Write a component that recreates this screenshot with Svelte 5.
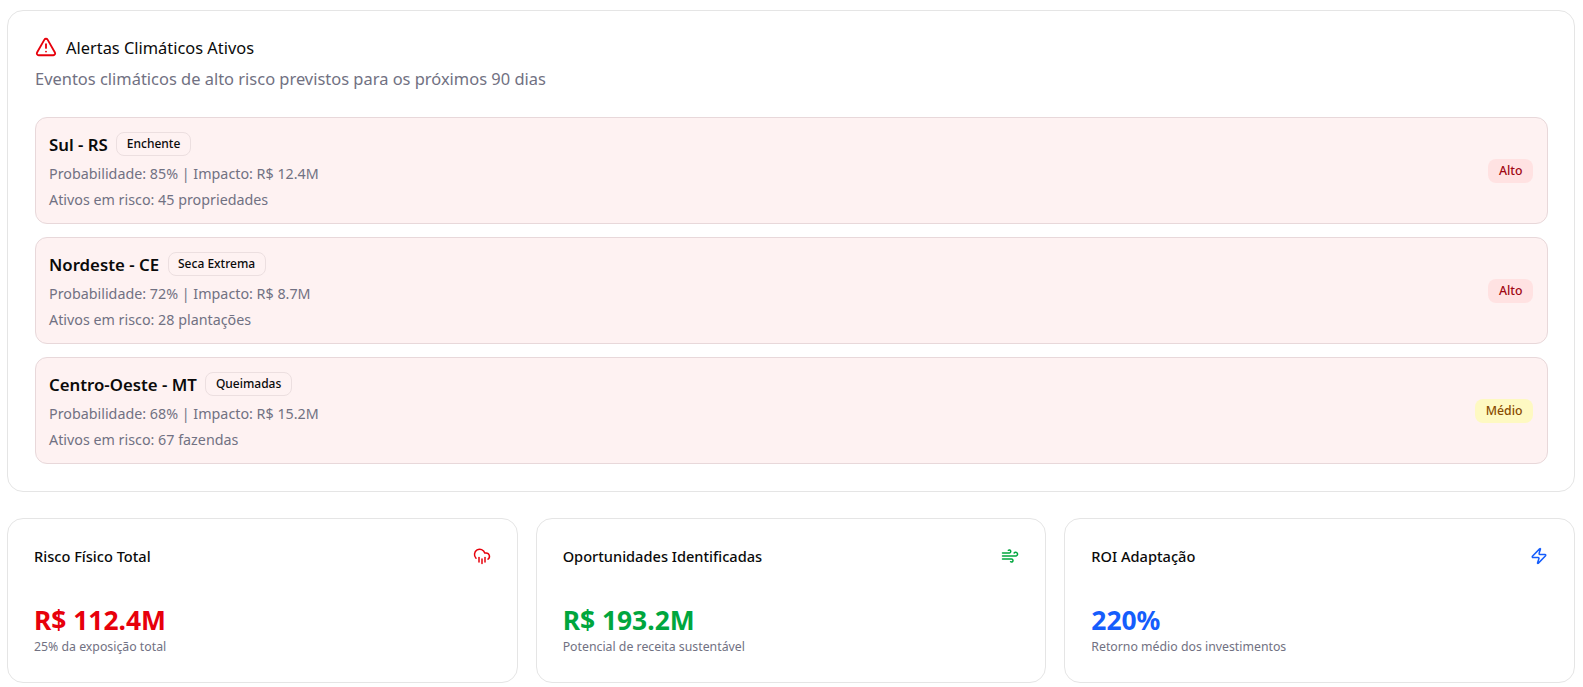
<script lang="ts">
  const alerts = [
    { region: "Sul - RS", type: "Enchente", prob: "85%", impact: "R$ 12.4M", assets: "45 propriedades", level: "Alto", tone: "high" },
    { region: "Nordeste - CE", type: "Seca Extrema", prob: "72%", impact: "R$ 8.7M", assets: "28 plantações", level: "Alto", tone: "high" },
    { region: "Centro-Oeste - MT", type: "Queimadas", prob: "68%", impact: "R$ 15.2M", assets: "67 fazendas", level: "Médio", tone: "mid" },
  ];

  const stats = [
    { title: "Risco Físico Total", value: "R$ 112.4M", note: "25% da exposição total", tone: "red", icon: "rain" },
    { title: "Oportunidades Identificadas", value: "R$ 193.2M", note: "Potencial de receita sustentável", tone: "green", icon: "wind" },
    { title: "ROI Adaptação", value: "220%", note: "Retorno médio dos investimentos", tone: "blue", icon: "zap" },
  ];
</script>

<div class="page">
  <section class="card alerts">
    <h2 class="title">
      <svg viewBox="0 0 24 24" class="warn">
        <path d="m21.73 18-8-14a2 2 0 0 0-3.48 0l-8 14A2 2 0 0 0 4 21h16a2 2 0 0 0 1.73-3" />
        <path d="M12 9v4" />
        <path d="M12 17h.01" />
      </svg>
      Alertas Climáticos Ativos
    </h2>
    <p class="sub">Eventos climáticos de alto risco previstos para os próximos 90 dias</p>

    <div class="list">
      {#each alerts as a (a.region)}
        <div class="item">
          <div>
            <div class="head">
              <span class="region">{a.region}</span>
              <span class="tag">{a.type}</span>
            </div>
            <p class="meta">Probabilidade: {a.prob} | Impacto: {a.impact}</p>
            <p class="meta">Ativos em risco: {a.assets}</p>
          </div>
          <span class="level {a.tone}">{a.level}</span>
        </div>
      {/each}
    </div>
  </section>

  <div class="stats">
    {#each stats as s (s.title)}
      <section class="card stat">
        <div class="stat-head">
          <span class="stat-title">{s.title}</span>
          <svg viewBox="0 0 24 24" class="ic {s.tone}">
            {#if s.icon === "rain"}
              <path d="M4 14.9A7 7 0 1 1 15.7 8h1.8a4.5 4.5 0 0 1 2.5 8.2" />
              <path d="M16 14v6" />
              <path d="M8 14v6" />
              <path d="M12 16v6" />
            {:else if s.icon === "wind"}
              <path d="M12.8 19.6A2 2 0 1 0 14 16H2" />
              <path d="M17.5 8a2.5 2.5 0 1 1 2 4H2" />
              <path d="M9.8 4.4A2 2 0 1 1 11 8H2" />
            {:else}
              <path d="M4 14a1 1 0 0 1-.78-1.63l9.9-10.2a.5.5 0 0 1 .86.46l-1.92 6.02A1 1 0 0 0 13 10h7a1 1 0 0 1 .78 1.63l-9.9 10.2a.5.5 0 0 1-.86-.46l1.92-6.02A1 1 0 0 0 11 14z" />
            {/if}
          </svg>
        </div>
        <div class="value {s.tone}">{s.value}</div>
        <div class="note">{s.note}</div>
      </section>
    {/each}
  </div>
</div>

<style>
  :global(body) {
    margin: 0;
    background: #fff;
    color: #0a0a0a;
    font-family: "Noto Sans", "Open Sans", sans-serif;
  }

  .page {
    padding: 10px 8px 6px 7px;
    display: flex;
    flex-direction: column;
    gap: 26px;
  }

  .card {
    background: #fff;
    border: 1px solid #e5e5e5;
    border-radius: 16px;
  }

  .alerts {
    padding: 24px 26px 27px 27px;
  }
  .title {
    display: flex;
    align-items: center;
    gap: 9px;
    margin: 0;
    height: 24px;
    font-size: 16.4px;
    font-weight: 400;
  }
  .warn {
    width: 22px;
    height: 22px;
    fill: none;
    stroke: #e7000b;
    stroke-width: 2;
    stroke-linecap: round;
    stroke-linejoin: round;
  }
  .sub {
    margin: 8px 0 0;
    font-size: 16.45px;
    line-height: 24px;
    color: #717182;
  }

  .list {
    margin-top: 26px;
    display: flex;
    flex-direction: column;
    gap: 13px;
  }
  .item {
    display: flex;
    align-items: center;
    justify-content: space-between;
    padding: 14px 14px 10px 13px;
    background: #fef2f2;
    border: 1px solid #e8d8da;
    border-radius: 12px;
  }
  .head {
    display: flex;
    align-items: center;
    gap: 8.5px;
    height: 24px;
    margin-bottom: 5px;
  }
  .region {
    font-size: 16.8px;
    font-weight: 600;
  }
  .tag {
    font-size: 12px;
    font-weight: 500;
    line-height: 16px;
    padding: 3px 9.5px;
    border: 1px solid #ecdfe0;
    border-radius: 8px;
  }
  .meta {
    margin: 0;
    font-size: 14.3px;
    line-height: 26px;
    color: #717182;
  }
  .level {
    font-size: 12.3px;
    font-weight: 500;
    line-height: 16px;
    padding: 4px 10.5px;
    border-radius: 8px;
    margin-top: -3px;
  }
  .level.high {
    background: #ffe2e2;
    color: #9f0712;
  }
  .level.mid {
    background: #fef9c2;
    color: #894b00;
  }

  .stats {
    display: grid;
    grid-template-columns: repeat(3, 1fr);
    gap: 18px;
  }
  .stat {
    padding: 25px 26px 24px 26px;
    height: 114px;
  }
  .stat-head {
    display: flex;
    align-items: center;
    justify-content: space-between;
    height: 24px;
    margin-bottom: 36px;
  }
  .stat-title {
    font-size: 14.6px;
    font-weight: 500;
  }
  .ic {
    width: 18px;
    height: 18px;
    fill: none;
    stroke: currentColor;
    stroke-width: 2;
    stroke-linecap: round;
    stroke-linejoin: round;
  }
  .value {
    font-size: 26.4px;
    font-weight: 700;
    line-height: 32px;
  }
  .note {
    margin-top: 3px;
    font-size: 12.3px;
    line-height: 16px;
    color: #717182;
  }
  .red {
    color: #e7000b;
  }
  .green {
    color: #00a63e;
  }
  .blue {
    color: #155dfc;
  }
</style>
